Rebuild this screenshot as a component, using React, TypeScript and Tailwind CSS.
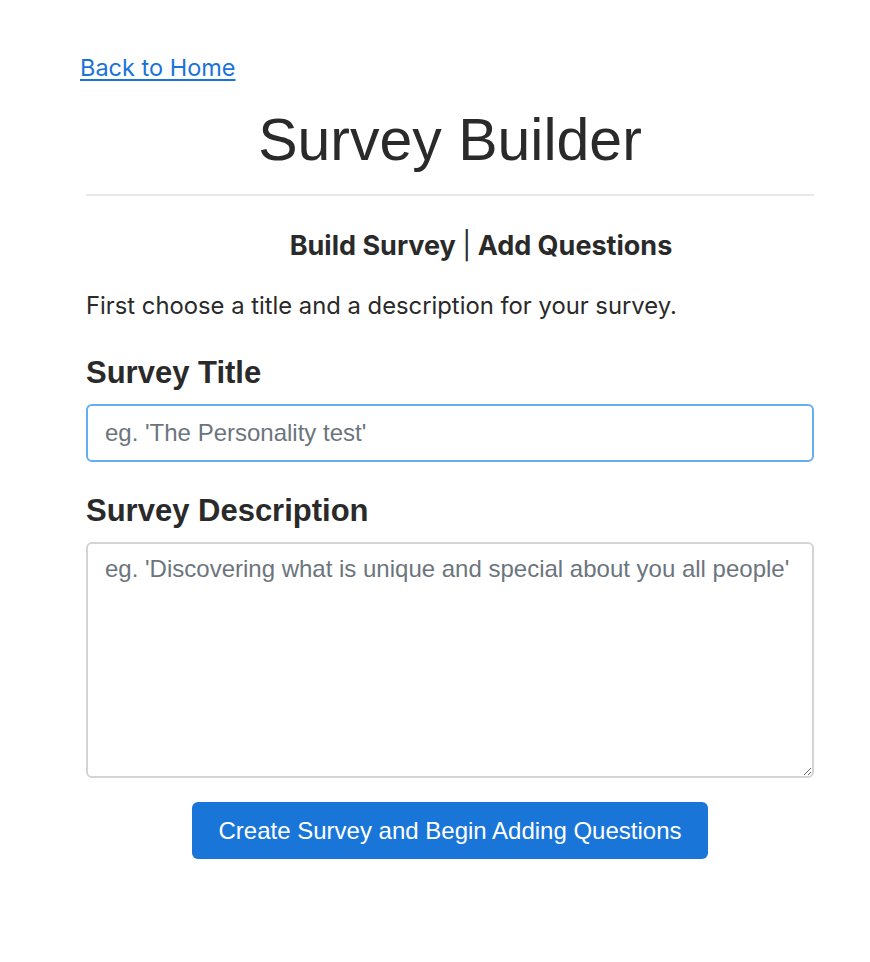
export default function App() {
  return (
    <div className="min-h-[962px] bg-white pt-[52px] pl-[80px] text-[#212529]">
      <a
        href="#"
        className="block w-fit font-['Inter',sans-serif] text-[23.5px] leading-[32px] text-[#1a73d9] underline underline-offset-[3px] decoration-[2px]"
      >
        Back to Home
      </a>
      <div className="ml-[6px] w-[728px]">
        <h1 className="mt-[20px] text-center font-['Liberation_Sans',Arial,sans-serif] text-[59px] leading-[72px] text-[#2a2a2a]">
          Survey Builder
        </h1>
        <hr className="mt-[18px] border-t-2 border-[#e8e8e8]" />
        <h2 className="mt-[34px] pl-[62px] text-center font-['Inter',sans-serif] text-[27px] font-bold leading-[32px] text-[#2a2a2a]">
          Build Survey <span className="font-normal">|</span> Add Questions
        </h2>
        <p className="mt-[28px] font-['Inter',sans-serif] text-[23.8px] leading-[32px] text-[#2a2a2a]">
          First choose a title and a description for your survey.
        </p>
        <label className="mt-[33px] block font-['Liberation_Sans',Arial,sans-serif] text-[31px] font-bold leading-[36px] text-[#2a2a2a]">
          Survey Title
        </label>
        <input
          type="text"
          placeholder="eg. 'The Personality test'"
          className="mt-[13px] block h-[58px] w-full rounded-[6px] border-2 border-[#63adf2] px-[17px] font-['Liberation_Sans',Arial,sans-serif] text-[24px] text-[#495057] outline-none placeholder:text-[#6c757d]"
        />
        <label className="mt-[31px] block font-['Liberation_Sans',Arial,sans-serif] text-[31px] font-bold leading-[36px] text-[#2a2a2a]">
          Survey Description
        </label>
        <textarea
          placeholder="eg. 'Discovering what is unique and special about you all people'"
          className="mt-[13px] block h-[236px] w-full rounded-[6px] border-2 border-[#d4d4d4] px-[17px] py-[10px] font-['Liberation_Sans',Arial,sans-serif] text-[24px] leading-[30px] text-[#495057] outline-none placeholder:text-[#6c757d]"
        />
        <div className="mt-[24px] flex justify-center">
          <button className="h-[57px] w-[516px] rounded-[6px] bg-[#1976d8] font-['Liberation_Sans',Arial,sans-serif] text-[24px] text-white">
            Create Survey and Begin Adding Questions
          </button>
        </div>
      </div>
    </div>
  );
}
